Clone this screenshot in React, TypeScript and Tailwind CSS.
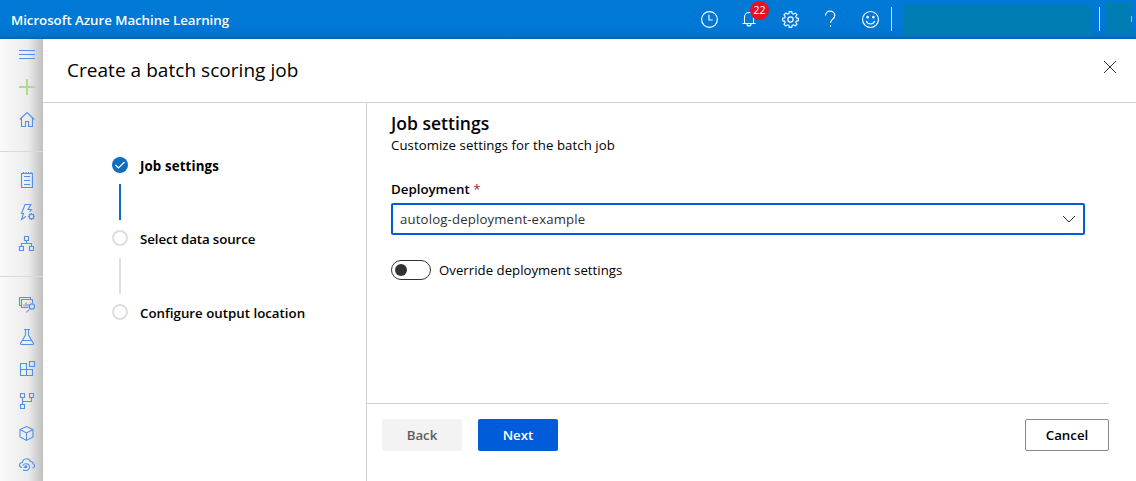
import type { ReactNode } from 'react';

function Icon({ children, className = 'size-4' }: { children: ReactNode; className?: string }) {
  return (
    <svg viewBox="0 0 16 16" fill="none" stroke="currentColor" strokeWidth="1.1" className={`shrink-0 overflow-visible ${className}`}>
      {children}
    </svg>
  );
}

function NavItem({ children, color = 'text-[#5590e8]' }: { children: ReactNode; color?: string }) {
  return (
    <button className={`flex h-8 w-[43px] shrink-0 items-center pl-[19px] ${color}`}>
      <Icon>{children}</Icon>
    </button>
  );
}

const gearPath =
  'M6.8.6h2.4l.3 1.9 1.3.5 1.6-1.1 1.7 1.7L13 5.2l.5 1.3 1.9.3v2.4l-1.9.3-.5 1.3 1.1 1.6-1.7 1.7-1.6-1.1-1.3.5-.3 1.9H6.8l-.3-1.9-1.3-.5-1.6 1.1-1.7-1.7L3 10.8l-.5-1.3-1.9-.3V6.8l1.9-.3L3 5.2 1.9 3.6l1.7-1.7L5.2 3l1.3-.5z';

function TopBar() {
  return (
    <header className="flex h-[39px] shrink-0 bg-linear-to-b from-[#0078d6] from-60% via-[#0074cf] via-90% to-[#0067b8] text-white">
      <h1 className="w-[701px] shrink-0 pl-[11px] text-[13.3px] leading-[41px] font-semibold tracking-[-0.05px]">
        Microsoft Azure Machine Learning
      </h1>
      <div className="flex w-[190px] shrink-0 items-start pt-[11px]">
        <Icon className="size-[17px]">
          <circle cx="8" cy="8" r="7.4" />
          <path d="M7.5 3.5V8.5H11" />
        </Icon>
        <div className="relative ml-[23px]">
          <Icon className="h-4 w-4">
            <path d="M3.5 12.5V6a4.5 4.5 0 0 1 9 0v6.5M1.5 12.5h13M6 13a2 2 0 0 0 4 0" />
          </Icon>
          <span className="absolute -top-[10px] left-[9px] flex size-[19px] items-center justify-center rounded-full bg-[#e81123] text-[10.5px] leading-none">
            22
          </span>
        </div>
        <Icon className="ml-[25px] size-[17px]">
          <path d={gearPath} />
          <circle cx="8" cy="8" r="2.5" />
        </Icon>
        <Icon className="ml-[23px] size-4">
          <path d="M3.5 4.5a4.5 4.5 0 0 1 4.6-4.3c2.8 0 4.7 1.7 4.7 4.2 0 3.6-4.3 3.800-4.300 7.600M8.500 14v1.800" strokeWidth="1.2" />
        </Icon>
        <Icon className="ml-6 size-[17px]">
          <circle cx="8" cy="8" r="7.5" />
          <path d="M4 9.5c1.5 3.6 6.5 3.6 8 0" />
          <circle cx="5.3" cy="5.8" r=".7" fill="currentColor" />
          <circle cx="10.7" cy="5.8" r=".7" fill="currentColor" />
        </Icon>
      </div>
      <div className="mt-[7px] h-6 w-px shrink-0 bg-[#cfe5f7]" />
      <div className="mt-[5px] ml-[11px] h-[31px] w-[189px] shrink-0 bg-[#007db3]" />
      <div className="mt-[7px] ml-[7px] h-6 w-px shrink-0 bg-[#cfe5f7]" />
      <div className="mt-[2px] ml-[6px] h-[31px] w-[25px] shrink-0 bg-[#007db3]" />
      <div className="mt-[16px] h-[6px] w-px shrink-0 bg-[#8cc2ee]" />
    </header>
  );
}

function SideNav() {
  return (
    <nav className="flex w-[43px] shrink-0 flex-col overflow-hidden bg-linear-to-r from-[#fafafa] via-[#ececec] via-65% to-[#c0c0c0]">
      <NavItem>
        <path d="M0 3.5h16M0 7.5h16M0 11.5h16" />
      </NavItem>
      <NavItem color="text-[#b3d88f]">
        <path d="M8 0v16M0 8h16" strokeWidth="2" />
      </NavItem>
      <NavItem>
        <path d="M.7 8.5 8 1.5l7.3 7M2.5 7v8.5h4v-5h3v5h4V7" />
      </NavItem>
      <div className="mt-4 mb-3 h-px shrink-0 bg-[#d9d9d9]" />
      <NavItem>
        <path d="M2.5 1.5h11v14h-11zM5 4.5h6M5 8.5h6M5 12.5h6M4.5 0v1.5M7 0v1.5M9.5 0v1.5M12 0v1.5" />
      </NavItem>
      <NavItem>
        <path d="M7 12.5 2.5 15.5l2-6h-2l3.5-9h6L9 5.5h3.5L10.5 8" />
        <circle cx="12.5" cy="12.5" r="2.3" />
        <path d="M12.5 9v1M12.5 15v1M9 12.5h1M15 12.5h1M10 10l.8.8M14.2 14.2l.8.8M15 10l-.8.8M10.8 14.2l-.8.8" />
      </NavItem>
      <NavItem>
        <path d="M5.5.5h4v4h-4zM.5 10.5h4v4h-4zM10.5 10.5h4v4h-4zM7.5 4.5v3M2.5 10.5v-3h10v3" />
      </NavItem>
      <div className="mt-4 mb-3 h-px shrink-0 bg-[#d9d9d9]" />
      <NavItem>
        <path d="M2 8.5H.5v-8h11v2M9.5 10.5h-7v-8h11V6M5 9.5V7.5M7 9.5V5.5M9 9.5V7" />
        <circle cx="13" cy="9.5" r="2.6" />
        <path d="m11 11.5-3.7 4" />
      </NavItem>
      <NavItem>
        <path d="M5 .5h6M6.5.5V6l-5 8.5q-.3 1 .7 1h11.6q1 0 .7-1L9.5 6V.5M3.5 11.5h9" />
      </NavItem>
      <NavItem>
        <path d="M1.5 2.5h6v6h-6zM1.5 8.5h6v6h-6zM7.5 8.5h6v6h-6zM10.5.5h5v5h-5z" />
      </NavItem>
      <NavItem>
        <path d="M1.5.5h4v4h-4zM10.5.5h4v4h-4zM1.5 11.5h4v4h-4zM3.5 4.5v7M12.5 4.5v4h-9" />
      </NavItem>
      <NavItem>
        <path d="M7.5 1.5 14 4.5V12l-6.5 3.5L1 12V4.5zM1 4.5 7.5 8 14 4.5M7.5 8v7.5" />
      </NavItem>
      <NavItem>
        <path d="M3 10.5C-.5 10-.2 5.5 3.5 5.5 4 1 10 .5 11.5 4.5c2-.2 2.5 1 2.5 2.2 2.5.8 2 4-.5 4.3M4 8.5c1-2.5 6-2.5 6.5 1 .3 3-2.5 5-6.5 3.5M4.5 10.5h1" />
        <circle cx="6.8" cy="9.8" r="1" fill="currentColor" />
      </NavItem>
    </nav>
  );
}

function StepLine({ active = false }: { active?: boolean }) {
  return <div className={`ml-[7px] h-9 w-[2px] ${active ? 'bg-[#106ebe]' : 'bg-[#e1dfdd]'}`} />;
}

function Step({ label, className, active = false }: { label: string; className: string; active?: boolean }) {
  return (
    <div className="flex h-4 items-center">
      {active ? (
        <span className="flex size-4 shrink-0 items-center justify-center rounded-full bg-[#106ebe] text-white">
          <Icon className="size-4">
            <path d="m3.5 8 3 3 6-6" strokeWidth="1.2" />
          </Icon>
        </span>
      ) : (
        <span className="size-4 shrink-0 rounded-full border-2 border-[#e1dfdd]" />
      )}
      <span className={`relative top-px ml-3 text-[13.3px] leading-4 whitespace-nowrap ${className}`}>{label}</span>
    </div>
  );
}

function Steps() {
  return (
    <aside className="w-[324px] shrink-0 border-r border-[#d1d1d1] pt-[54px] pl-[69px]">
      <Step label="Job settings" active className="font-bold tracking-[0.12px]" />
      <div className="pt-[11px] pb-[10px]"><StepLine active /></div>
      <Step label="Select data source" className="font-semibold tracking-[-0.1px]" />
      <div className="pt-3 pb-[10px]"><StepLine /></div>
      <Step label="Configure output location" className="font-semibold" />
    </aside>
  );
}

function SettingsForm() {
  return (
    <section className="flex-1 pt-2 pr-6 pl-6">
      <h3 className="text-[17.5px] leading-6 font-semibold tracking-[0.02px]">Job settings</h3>
      <p className="mt-px text-[13.2px] leading-[18px] tracking-[0.07px]">Customize settings for the batch job</p>
      <label className="mt-[25px] block text-[13.3px] leading-5 font-semibold">
        Deployment <span className="font-normal text-[#a4262c]">*</span>
      </label>
      <button className="mt-1 flex h-8 w-[694px] items-center justify-between rounded-[2px] border-2 border-[#015cda] pr-[7px] pl-[7px] text-[#323130]">
        <span className="pt-[2px] text-[13.2px] tracking-[0.15px]">autolog-deployment-example</span>
        <svg viewBox="0 0 14 8" className="h-2 w-[14px]" fill="none" stroke="currentColor">
          <path d="m1 1 6 6 6-6" />
        </svg>
      </button>
      <div className="mt-[25px] flex h-5 items-center">
        <span className="flex h-5 w-10 items-center rounded-full border border-[#323130] pl-[3px]">
          <span className="size-3 rounded-full bg-[#333333]" />
        </span>
        <span className="ml-2 pt-[2px] text-[13.2px] tracking-[0.03px]">Override deployment settings</span>
      </div>
    </section>
  );
}

function Footer() {
  return (
    <footer className="mr-[27px] flex h-[78px] shrink-0 items-start border-t border-[#d1d1d1] pt-[15px] pl-[15px] text-[13.3px] font-semibold">
      <button className="h-8 w-20 rounded-[2px] bg-[#f3f3f3] pt-px text-[#605e5c]">Back</button>
      <button className="ml-4 h-8 w-20 rounded-[2px] bg-[#015cda] pt-px text-white">Next</button>
      <button className="ml-auto h-8 w-[84px] rounded-[2px] border border-[#8a8886] pt-px">Cancel</button>
    </footer>
  );
}

export default function App() {
  return (
    <div className="flex h-[481px] w-[1136px] flex-col overflow-hidden bg-white font-['Open_Sans','Noto_Sans',sans-serif] text-black">
      <TopBar />
      <div className="flex min-h-0 flex-1">
        <SideNav />
        <main className="flex flex-1 flex-col bg-white">
          <div className="flex h-16 shrink-0 items-start justify-between border-b border-[#d1d1d1] pr-5 pl-6">
            <h2 className="text-[19px] leading-[62px] tracking-[0.04px]">Create a batch scoring job</h2>
            <svg viewBox="0 0 12 12" className="mt-[22px] size-3" fill="none" stroke="#323130">
              <path d="m0 0 12 12M12 0 0 12" />
            </svg>
          </div>
          <div className="flex min-h-0 flex-1">
            <Steps />
            <div className="flex flex-1 flex-col">
              <SettingsForm />
              <Footer />
            </div>
          </div>
        </main>
      </div>
    </div>
  );
}
